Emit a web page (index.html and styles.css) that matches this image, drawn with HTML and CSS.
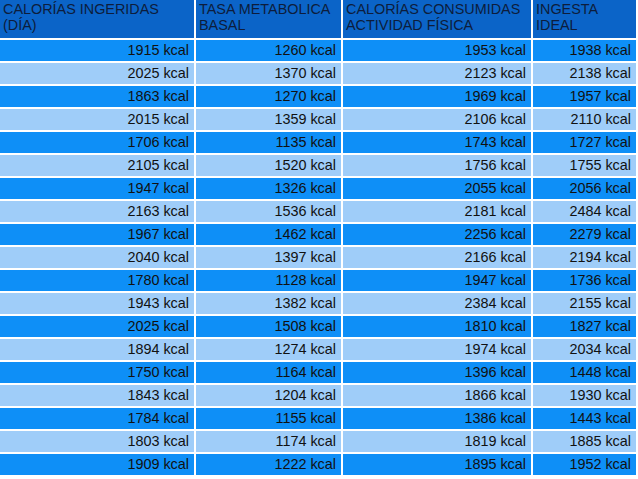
FILE: index.html
```html
<!DOCTYPE html>
<html lang="es">
<head>
<meta charset="utf-8">
<title>Calorías</title>
<link rel="stylesheet" href="styles.css">
</head>
<body>
<table class="kcal-table">
  <colgroup>
    <col class="c1"><col class="c2"><col class="c3"><col class="c4">
  </colgroup>
  <thead>
    <tr>
      <th>CALORÍAS INGERIDAS<br>(DÍA)</th>
      <th>TASA METABOLICA<br>BASAL</th>
      <th>CALORÍAS CONSUMIDAS<br>ACTIVIDAD FÍSICA</th>
      <th>INGESTA<br>IDEAL</th>
    </tr>
  </thead>
  <tbody>
    <tr><td>1915 kcal</td><td>1260 kcal</td><td>1953 kcal</td><td>1938 kcal</td></tr>
    <tr><td>2025 kcal</td><td>1370 kcal</td><td>2123 kcal</td><td>2138 kcal</td></tr>
    <tr><td>1863 kcal</td><td>1270 kcal</td><td>1969 kcal</td><td>1957 kcal</td></tr>
    <tr><td>2015 kcal</td><td>1359 kcal</td><td>2106 kcal</td><td>2110 kcal</td></tr>
    <tr><td>1706 kcal</td><td>1135 kcal</td><td>1743 kcal</td><td>1727 kcal</td></tr>
    <tr><td>2105 kcal</td><td>1520 kcal</td><td>1756 kcal</td><td>1755 kcal</td></tr>
    <tr><td>1947 kcal</td><td>1326 kcal</td><td>2055 kcal</td><td>2056 kcal</td></tr>
    <tr><td>2163 kcal</td><td>1536 kcal</td><td>2181 kcal</td><td>2484 kcal</td></tr>
    <tr><td>1967 kcal</td><td>1462 kcal</td><td>2256 kcal</td><td>2279 kcal</td></tr>
    <tr><td>2040 kcal</td><td>1397 kcal</td><td>2166 kcal</td><td>2194 kcal</td></tr>
    <tr><td>1780 kcal</td><td>1128 kcal</td><td>1947 kcal</td><td>1736 kcal</td></tr>
    <tr><td>1943 kcal</td><td>1382 kcal</td><td>2384 kcal</td><td>2155 kcal</td></tr>
    <tr><td>2025 kcal</td><td>1508 kcal</td><td>1810 kcal</td><td>1827 kcal</td></tr>
    <tr><td>1894 kcal</td><td>1274 kcal</td><td>1974 kcal</td><td>2034 kcal</td></tr>
    <tr><td>1750 kcal</td><td>1164 kcal</td><td>1396 kcal</td><td>1448 kcal</td></tr>
    <tr><td>1843 kcal</td><td>1204 kcal</td><td>1866 kcal</td><td>1930 kcal</td></tr>
    <tr><td>1784 kcal</td><td>1155 kcal</td><td>1386 kcal</td><td>1443 kcal</td></tr>
    <tr><td>1803 kcal</td><td>1174 kcal</td><td>1819 kcal</td><td>1885 kcal</td></tr>
    <tr><td>1909 kcal</td><td>1222 kcal</td><td>1895 kcal</td><td>1952 kcal</td></tr>
  </tbody>
</table>
</body>
</html>
```
FILE: styles.css
```css
html, body {
  margin: 0;
  padding: 0;
  background: #ffffff;
}

.kcal-table {
  width: 638px;
  table-layout: fixed;
  border-collapse: separate;
  border-spacing: 0;
  font-family: "Liberation Sans", Arial, sans-serif;
  font-size: 14.4px;
}

.c1 { width: 196px; }
.c2 { width: 147px; }
.c3 { width: 190px; }
.c4 { width: 105px; }

.kcal-table th,
.kcal-table td {
  border-right: 2px solid #ffffff;
  border-bottom: 2px solid #ffffff;
  padding: 0;
}

.kcal-table th {
  height: 40px;
  background: #0b64c8;
  color: #0d1d3c;
  font-weight: normal;
  text-align: left;
  vertical-align: top;
  line-height: 16px;
  padding: 1px 3px 0 3px;
  box-sizing: border-box;
}

.kcal-table td {
  height: 21px;
  line-height: 21px;
  text-align: right;
  padding-right: 5px;
  color: #111111;
  white-space: nowrap;
}

.kcal-table tbody tr:nth-child(odd) td {
  background: #0e8ff7;
}

.kcal-table tbody tr:nth-child(even) td {
  background: #9fcdf9;
}
```
